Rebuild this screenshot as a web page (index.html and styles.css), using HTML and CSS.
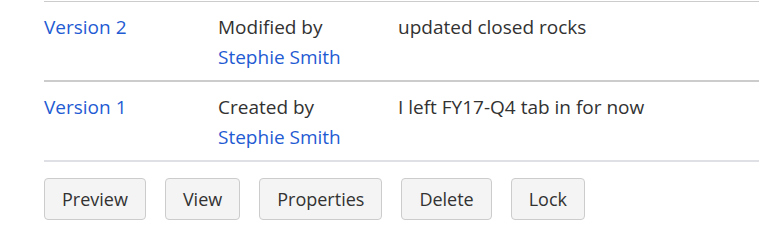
FILE: index.html
```html
<!DOCTYPE html>
<html lang="en">
<head>
<meta charset="utf-8">
<title>Versions</title>
<link rel="stylesheet" href="styles.css">
</head>
<body>
<div class="wrap">
  <div class="versions">
    <div class="row first">
      <div class="cell"><a class="link" href="#">Version 2</a></div>
      <div class="cell">Modified by<br><a class="link" href="#">Stephie Smith</a></div>
      <div class="cell">updated closed rocks</div>
    </div>
    <div class="row">
      <div class="cell"><a class="link" href="#">Version 1</a></div>
      <div class="cell">Created by<br><a class="link" href="#">Stephie Smith</a></div>
      <div class="cell">I left FY17-Q4 tab in for now</div>
    </div>
  </div>
  <div class="actions">
    <button class="btn">Preview</button>
    <button class="btn">View</button>
    <button class="btn">Properties</button>
    <button class="btn">Delete</button>
    <button class="btn">Lock</button>
  </div>
</div>
</body>
</html>
```

FILE: styles.css
```css
html, body {
  margin: 0;
  padding: 0;
  background: #ffffff;
}

body {
  font-family: "Segoe UI", "Open Sans", "Noto Sans", sans-serif;
  font-size: 19px;
  line-height: 30px;
  color: #323232;
}

.wrap {
  padding: 1px 0 0 44px;
}

.versions {
  border-bottom: 2px solid #dfe0e6;
}

.row {
  display: grid;
  grid-template-columns: 174px 180px 1fr;
  padding: 10px 0 8px;
  border-top: 2px solid #cccccc;
}

.row.first {
  border-top-width: 1px;
}

.cell {
  min-width: 0;
}

.link {
  color: #1f5bd3;
  text-decoration: none;
}

.actions {
  display: flex;
  gap: 19px;
  margin-top: 16px;
}

.btn {
  font-family: inherit;
  font-size: 18px;
  line-height: 24px;
  color: #323232;
  background: #f4f4f4;
  border: 1px solid #cccccc;
  border-radius: 4px;
  padding: 8px 17px;
  margin: 0;
}
```
